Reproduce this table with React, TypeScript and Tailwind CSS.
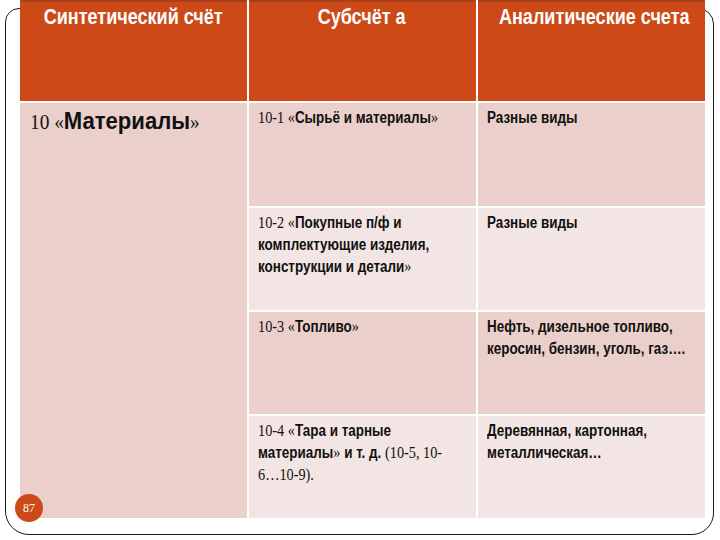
import React from "react";

const S = ({ children }: { children: React.ReactNode }) => (
  <span className="font-['Liberation_Serif','Times_New_Roman',serif] font-normal text-[17px]">{children}</span>
);

const N = ({ children }: { children: React.ReactNode }) => (
  <div className="inline-block origin-top-left scale-x-[0.84] whitespace-nowrap">{children}</div>
);

export default function App() {
  const sans = "font-['Liberation_Sans',Arial,sans-serif]";
  const cell = `px-[9px] pt-[4px] text-[16px] leading-[22px] text-[#111] font-bold ${sans}`;
  return (
    <div className="relative w-[720px] h-[540px] bg-white overflow-hidden">
      <div className="ml-[5px] mt-[8px] w-[709px] h-[527px] border-[1.5px] border-[#1a1a1a] rounded-tl-[14px] rounded-tr-[16px] rounded-bl-[24px] rounded-br-[22px]">
        <div className="-mt-[9.5px] ml-[13.5px] w-[685px] grid grid-cols-[227px_227px_227px] grid-rows-[101px_103px_102px_102px_102px] gap-[2px] bg-white">
          {/* header */}
          {["Синтетический счёт", "Субсчёт а", "Аналитические счета"].map((t) => (
            <div
              key={t}
              className={`bg-[#cd4917] shadow-[inset_0_2px_0_#a9401c] text-white text-center font-bold text-[22px] leading-[28px] pt-[3px] ${sans}`}
            >
              <span className="inline-block origin-center scale-x-[0.82] whitespace-nowrap">{t}</span>
            </div>
          ))}
          {/* column 1 spanning */}
          <div className={`row-span-4 bg-[#ebcfcb] px-[10px] pt-[3px] text-[#111] text-[24px] leading-[30px] font-bold ${sans}`}>
            <div className="inline-block origin-top-left scale-x-[0.92] whitespace-nowrap">
              <span className="font-['Liberation_Serif',serif] font-normal text-[21px]">10 «</span>Материалы
              <span className="font-['Liberation_Serif',serif] font-normal text-[21px]">»</span>
            </div>
          </div>
          {/* row 1 */}
          <div className={`bg-[#ebcfcb] ${cell}`}>
            <N>
              <S>10-1 «</S>Сырьё и материалы<S>»</S>
            </N>
          </div>
          <div className={`bg-[#ebcfcb] ${cell}`}>
            <N>Разные виды</N>
          </div>
          {/* row 2 */}
          <div className={`bg-[#f3e5e3] ${cell}`}>
            <N>
              <S>10-2 «</S>Покупные п/ф и
              <br />
              комплектующие изделия,
              <br />
              конструкции и детали<S>»</S>
            </N>
          </div>
          <div className={`bg-[#f3e5e3] ${cell}`}>
            <N>Разные виды</N>
          </div>
          {/* row 3 */}
          <div className={`bg-[#ebcfcb] ${cell}`}>
            <N>
              <S>10-3 «</S>Топливо<S>»</S>
            </N>
          </div>
          <div className={`bg-[#ebcfcb] ${cell}`}>
            <N>
              Нефть, дизельное топливо,
              <br />
              керосин, бензин, уголь, газ….
            </N>
          </div>
          {/* row 4 */}
          <div className={`bg-[#f3e5e3] ${cell}`}>
            <N>
              <S>10-4 «</S>Тара и тарные
              <br />
              материалы<S>»</S> и т. д. <S>(10-5, 10-</S>
              <br />
              <S>6…10-9).</S>
            </N>
          </div>
          <div className={`bg-[#f3e5e3] ${cell}`}>
            <N>
              Деревянная, картонная,
              <br />
              металлическая…
            </N>
          </div>
        </div>
      </div>
      <div className="absolute left-[15px] top-[494px] w-[28px] h-[28px] rounded-full bg-[#cd4917] flex items-center justify-center text-white text-[12px] font-['Liberation_Serif',serif]">
        87
      </div>
    </div>
  );
}
